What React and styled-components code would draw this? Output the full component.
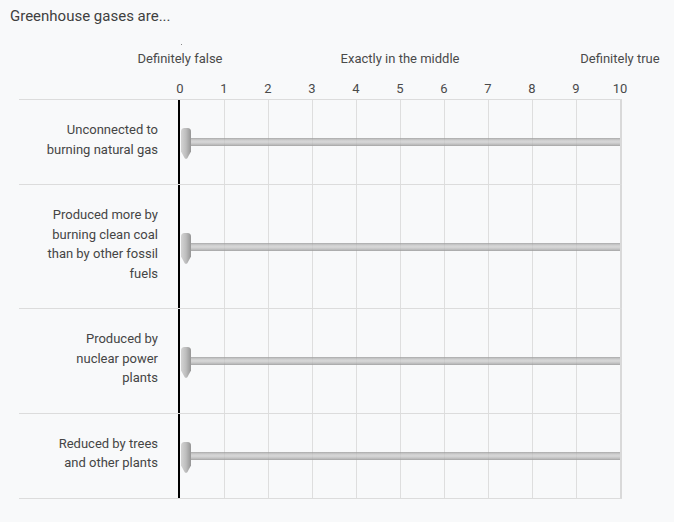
import React from "react";
import styled, { createGlobalStyle } from "styled-components";

const Global = createGlobalStyle`
  html, body { margin: 0; padding: 0; background: #f8f9fa; }
  body { font-family: Roboto, "Liberation Sans", Arial, sans-serif; color: #4a4a4a; }
`;

const Page = styled.div`
  padding: 6px 0 20px 10px;
`;

const Title = styled.div`
  font-size: 15px;
  line-height: 20px;
  color: #3f3f3f;
`;

const Matrix = styled.div`
  margin-left: 9px;
  width: 603px;
`;

const HeaderRow = styled.div`
  display: grid;
  grid-template-columns: 161px 440px;
  margin-top: ${(p) => p.$top}px;
  font-size: 13px;
  line-height: 18px;
  color: #4a4a4a;
`;

const Scale = styled.div`
  display: flex;
  justify-content: space-between;
`;

const Mark = styled.div`
  position: relative;
  width: 0;
  display: flex;
  justify-content: center;
  white-space: nowrap;
`;

const Dot = styled.span`
  position: absolute;
  top: -6px;
  left: 1px;
  width: 1px;
  height: 1px;
  background: #888;
`;

const Row = styled.div`
  display: grid;
  grid-template-columns: 159px 444px;
  border-bottom: 1px solid #dcdcdc;
  border-top: ${(p) => (p.$first ? "1px solid #dcdcdc" : "none")};
  margin-top: ${(p) => (p.$first ? "1px" : "0")};
`;

const Label = styled.div`
  padding: 20px 20px 25px 0;
  text-align: right;
  font-size: 13px;
  line-height: 19.5px;
  color: #454545;
`;

const SliderCell = styled.div`
  position: relative;
  display: flex;
  align-items: center;
  border-left: 2px solid #000;
  border-right: 2px solid #d9d9d9;
  background-image: repeating-linear-gradient(
    to right,
    transparent 0,
    transparent 43px,
    #dedede 43px,
    #dedede 44px
  );
  background-repeat: no-repeat;
  background-position: 1px 0;
`;

const Track = styled.div`
  flex: 1;
  height: 8px;
  margin-left: 5px;
  background: linear-gradient(
    to bottom,
    rgba(150, 150, 150, 0.8) 0%,
    rgba(190, 190, 190, 0.75) 25%,
    rgba(205, 205, 205, 0.75) 50%,
    rgba(180, 180, 180, 0.8) 78%,
    rgba(150, 150, 150, 0.85) 100%
  );
`;

const HandleWrap = styled.div`
  position: absolute;
  left: 1px;
  top: 50%;
  margin-top: -14px;
  width: 10px;
  height: 31px;
  line-height: 0;
`;

const Handle = ({ id }) => (
  <HandleWrap>
    <svg width="10" height="31" viewBox="0 0 10 31">
      <defs>
        <linearGradient id={id} x1="0" y1="0" x2="1" y2="0">
          <stop offset="0" stopColor="#d4d4d4" />
          <stop offset="0.5" stopColor="#bdbdbd" />
          <stop offset="1" stopColor="#959595" />
        </linearGradient>
      </defs>
      <path
        d="M0 3.5 Q0 0 3.5 0 H6.5 Q10 0 10 3.5 V23.5 L6.3 30.2 Q5 31.2 3.7 30.2 L0 23.5 Z"
        fill={`url(#${id})`}
      />
    </svg>
  </HandleWrap>
);

const items = [
  ["Unconnected to", "burning natural gas"],
  ["Produced more by", "burning clean coal", "than by other fossil", "fuels"],
  ["Produced by", "nuclear power", "plants"],
  ["Reduced by trees", "and other plants"],
];

const anchors = ["Definitely false", "Exactly in the middle", "Definitely true"];
const ticks = Array.from({ length: 11 }, (_, i) => i);

export default function App() {
  return (
    <Page>
      <Global />
      <Title>Greenhouse gases are...</Title>
      <Matrix>
        <HeaderRow $top={24}>
          <div />
          <Scale>
            {anchors.map((a, i) => (
              <Mark key={a}>
                {i === 0 && <Dot />}
                {a}
              </Mark>
            ))}
          </Scale>
        </HeaderRow>
        <HeaderRow $top={12}>
          <div />
          <Scale>
            {ticks.map((t) => (
              <Mark key={t}>{t}</Mark>
            ))}
          </Scale>
        </HeaderRow>
        {items.map((lines, i) => (
          <Row key={i} $first={i === 0}>
            <Label>
              {lines.map((l, j) => (
                <div key={j}>{l}</div>
              ))}
            </Label>
            <SliderCell>
              <Track />
              <Handle id={`hg${i}`} />
            </SliderCell>
          </Row>
        ))}
      </Matrix>
    </Page>
  );
}
